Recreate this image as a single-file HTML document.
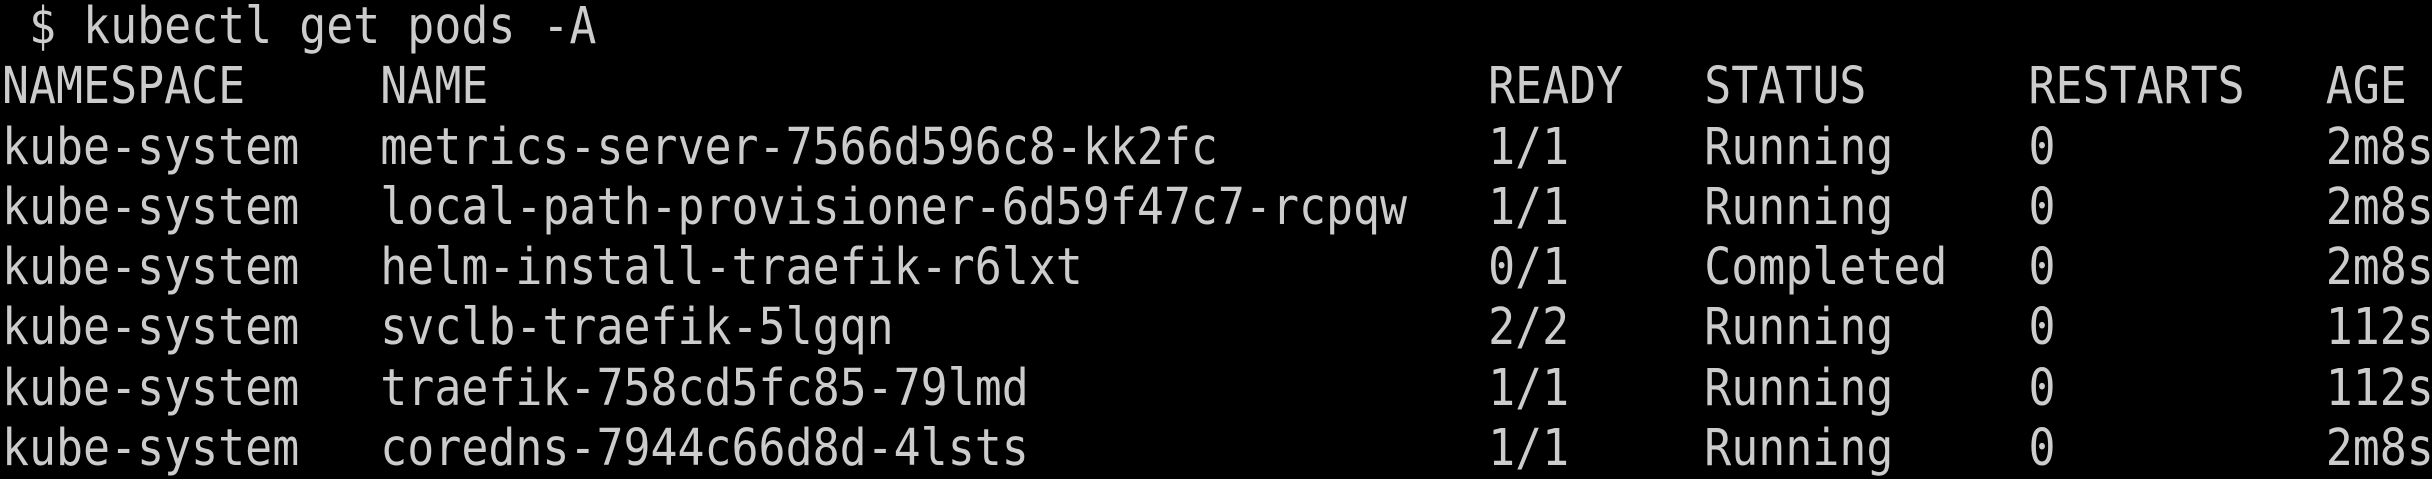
<!DOCTYPE html>
<html><head><meta charset="utf-8"><style>
html,body{margin:0;padding:0;background:#000;width:2432px;height:470px;overflow:hidden}
pre{margin:0;position:absolute;left:2px;top:-3px;font-family:"DejaVu Sans Mono","Liberation Mono",monospace;font-size:51px;line-height:60.3px;color:#cccccc;transform:scaleX(0.88);transform-origin:0 0;white-space:pre}
</style></head><body>
<pre> $ kubectl get pods -A
NAMESPACE     NAME                                     READY   STATUS      RESTARTS   AGE
kube-system   metrics-server-7566d596c8-kk2fc          1/1     Running     0          2m8s
kube-system   local-path-provisioner-6d59f47c7-rcpqw   1/1     Running     0          2m8s
kube-system   helm-install-traefik-r6lxt               0/1     Completed   0          2m8s
kube-system   svclb-traefik-5lgqn                      2/2     Running     0          112s
kube-system   traefik-758cd5fc85-79lmd                 1/1     Running     0          112s
kube-system   coredns-7944c66d8d-4lsts                 1/1     Running     0          2m8s</pre>
</body></html>
